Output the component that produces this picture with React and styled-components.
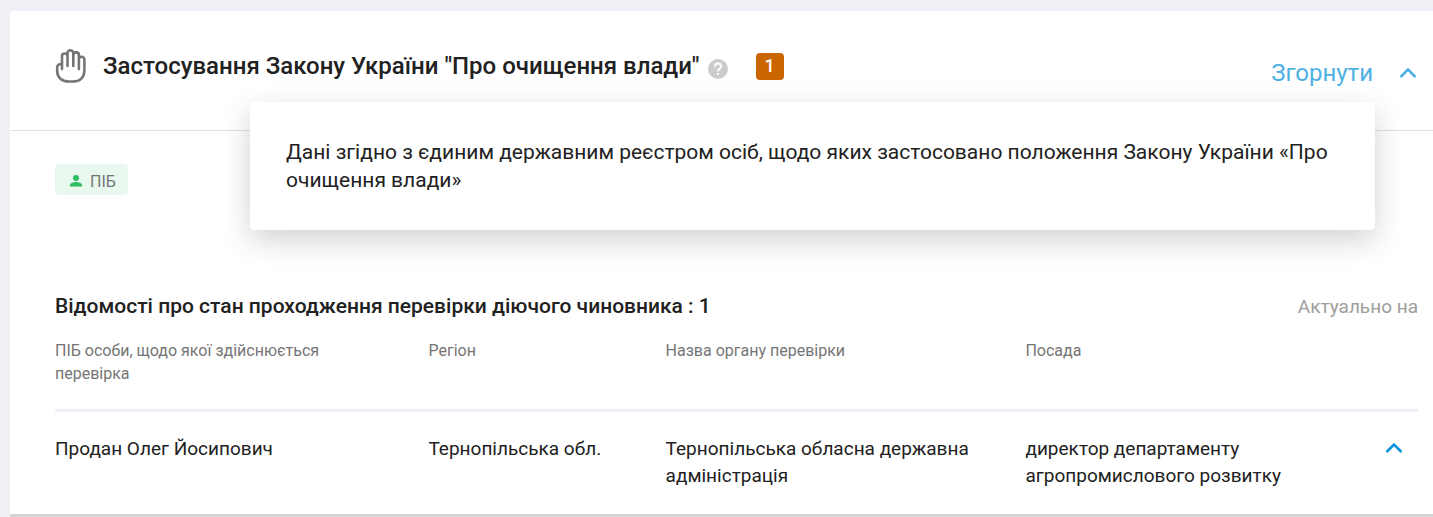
import React from "react";
import styled, { createGlobalStyle } from "styled-components";

const GlobalStyle = createGlobalStyle`
  *, *::before, *::after { box-sizing: border-box; }
  body {
    margin: 0;
    background: #eff0f6;
    color: #212121;
    font-family: Roboto, "Liberation Sans", sans-serif;
  }
`;

const Page = styled.main`
  padding: 11px 0 0 10px;
`;

const Card = styled.section`
  position: relative;
  background: #fff;
  border-bottom: 3px solid #d4d4d4;
  border-top-left-radius: 4px;
`;

const CardHeader = styled.header`
  display: flex;
  align-items: center;
  justify-content: space-between;
  height: 120px;
  padding: 0 16px 0 45px;
  border-bottom: 1px solid #e2e2e2;
`;

const TitleGroup = styled.div`
  display: flex;
  align-items: center;
  padding-bottom: 10px;
`;

const Title = styled.h2`
  margin: 0 8px 0 16px;
  font-size: 24px;
  font-weight: 500;
  line-height: 32px;
`;

const HelpButton = styled.button`
  display: flex;
  align-items: center;
  justify-content: center;
  width: 20px;
  height: 20px;
  margin: 6px 28px 0 0;
  padding: 0;
  border: 0;
  border-radius: 50%;
  background: #ccc;
  color: #fff;
`;

const Count = styled.span`
  width: 28px;
  height: 27px;
  margin-top: 2px;
  border-radius: 4px;
  background: #cb6500;
  color: #fff;
  font-size: 18px;
  font-weight: 500;
  line-height: 26px;
  text-align: center;
`;

const CollapseButton = styled.button`
  display: flex;
  align-items: center;
  gap: 26px;
  margin-top: 4px;
  padding: 0;
  border: 0;
  background: none;
  color: #4db1e4;
  font: inherit;
  font-size: 24px;
  line-height: 32px;
`;

const RowToggle = styled.button`
  display: flex;
  padding: 7px 0 0;
  border: 0;
  background: none;
  color: #0d95dd;
`;

const Tooltip = styled.div`
  position: absolute;
  top: 91px;
  left: 240px;
  right: 58px;
  padding: 36px;
  border-radius: 4px;
  background: #fff;
  box-shadow: 0 10px 30px rgba(0, 0, 0, 0.18);
  font-size: 21px;
  line-height: 28px;
`;

const Content = styled.div`
  padding: 33px 15px 25px 45px;
`;

const Tag = styled.span`
  display: inline-flex;
  align-items: center;
  gap: 8px;
  height: 31px;
  padding: 3px 12px 0 15px;
  border-radius: 4px;
  background: #e9f8ef;
  color: #757575;
  font-size: 16px;
  vertical-align: top;
`;

const SectionHeader = styled.div`
  display: flex;
  justify-content: space-between;
  margin-top: 97px;
  line-height: 28px;
`;

const SectionTitle = styled.h3`
  margin: 0;
  font-size: 21px;
  font-weight: 500;
`;

const UpdatedAt = styled.span`
  color: #9e9e9e;
  font-size: 19px;
  line-height: 30px;
`;

const Table = styled.table`
  width: 100%;
  margin-top: 17px;
  border-collapse: collapse;
  table-layout: fixed;
  text-align: left;
`;

const Column = styled.col`
  width: ${({ $width }) => $width};
`;

const HeadCell = styled.th`
  padding: 0 40px 24px 0;
  border-bottom: 3px solid #eff0f6;
  color: #757575;
  font-size: 16px;
  font-weight: 400;
  line-height: 23px;
  vertical-align: top;
`;

const Cell = styled.td`
  padding: 23px 40px 0 0;
  font-size: 19px;
  line-height: 27px;
  vertical-align: top;
`;

const ActionCell = styled(Cell)`
  padding-right: 0;
`;

const HandIcon = () => (
  <svg width="32" height="34" viewBox="0 0 32 34" fill="none" stroke="#757575" strokeWidth="2.6" strokeLinecap="round" strokeLinejoin="round" aria-hidden="true">
    <path d="M7 20V7.200a2.700 2.700 0 0 1 5.500 0V17M12.500 17V4.200a2.900 2.900 0 0 1 5.800 0V17M18.300 17V6.200a2.800 2.800 0 0 1 5.600 0V20M23.900 10.500a2.700 2.700 0 0 1 5.500 0V21.500C29.400 28.500 24.800 32.500 18.500 32.500H13.500C7 32.500 2.200 28.500 2.200 22V18.200C2.200 15.700 4.500 14.700 7 15.200" />
  </svg>
);

const Chevron = () => (
  <svg width="18" height="12" viewBox="0 0 18 12" fill="none" stroke="currentColor" strokeWidth="2.6" aria-hidden="true">
    <path d="M1.500 10 9 2.500l7.500 7.500" />
  </svg>
);

const QuestionIcon = () => (
  <svg width="10" height="14" viewBox="0 0 10 14" fill="none" stroke="currentColor" strokeWidth="2" aria-hidden="true">
    <path d="M2 4.500a3 3 0 0 1 6 0C8 6.600 5 6.800 5 9.500M5 11v2" />
  </svg>
);

const PersonIcon = () => (
  <svg width="12" height="12" viewBox="0 0 12 12" fill="#2fbd63" aria-hidden="true">
    <circle cx="6" cy="3" r="3" />
    <path d="M0 11.500V10C0 8 3.500 7 6 7s6 1 6 3v1.500z" />
  </svg>
);

const columns = [
  { label: "ПІБ особи, щодо якої здійснюється перевірка", width: "27.4%" },
  { label: "Регіон", width: "17.4%" },
  { label: "Назва органу перевірки", width: "26.4%" },
  { label: "Посада", width: "auto" },
];

const rows = [
  [
    "Продан Олег Йосипович",
    "Тернопільська обл.",
    "Тернопільська обласна державна адміністрація",
    "директор департаменту агропромислового розвитку",
  ],
];

export default function App() {
  return (
    <Page>
      <GlobalStyle />
      <Card>
        <CardHeader>
          <TitleGroup>
            <HandIcon />
            <Title>Застосування Закону України "Про очищення влади"</Title>
            <HelpButton type="button" aria-label="Довідка" aria-describedby="registry-help">
              <QuestionIcon />
            </HelpButton>
            <Count>1</Count>
          </TitleGroup>
          <CollapseButton type="button">
            Згорнути
            <Chevron />
          </CollapseButton>
        </CardHeader>
        <Tooltip id="registry-help" role="tooltip">
          Дані згідно з єдиним державним реєстром осіб, щодо яких застосовано положення Закону України «Про очищення влади»
        </Tooltip>
        <Content>
          <Tag>
            <PersonIcon />
            ПІБ
          </Tag>
          <SectionHeader>
            <SectionTitle>Відомості про стан проходження перевірки діючого чиновника : 1</SectionTitle>
            <UpdatedAt>Актуально на</UpdatedAt>
          </SectionHeader>
          <Table>
            <colgroup>
              {columns.map((column) => (
                <Column key={column.label} $width={column.width} />
              ))}
              <Column $width="33px" />
            </colgroup>
            <thead>
              <tr>
                {columns.map((column) => (
                  <HeadCell key={column.label} scope="col">{column.label}</HeadCell>
                ))}
                <HeadCell as="td" />
              </tr>
            </thead>
            <tbody>
              {rows.map((row) => (
                <tr key={row[0]}>
                  {row.map((value) => (
                    <Cell key={value}>{value}</Cell>
                  ))}
                  <ActionCell>
                    <RowToggle type="button" aria-label="Згорнути рядок">
                      <Chevron />
                    </RowToggle>
                  </ActionCell>
                </tr>
              ))}
            </tbody>
          </Table>
        </Content>
      </Card>
    </Page>
  );
}
